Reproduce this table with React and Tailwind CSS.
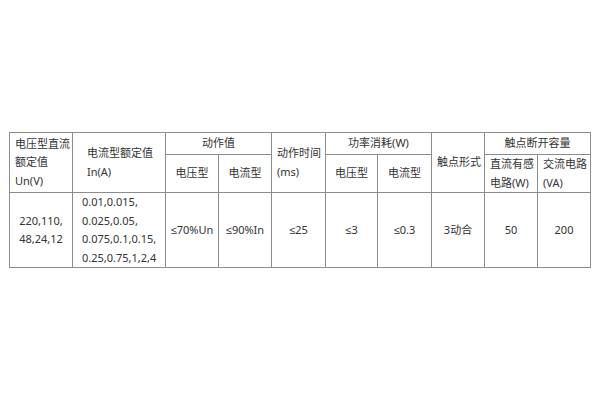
import React from 'react';

const cell = 'border border-[#8c8c8c] p-0 align-middle';

// narrow less-or-equal sign, the CJK font draws it full-width
const Le = () => <span style={{ fontFamily: '"Liberation Sans", sans-serif' }}>≤</span>;

export default function App() {
    return (
        <div
            className="flex h-[400px] w-[600px] items-center justify-center bg-white text-[11px] leading-[18.5px] text-[#333]"
            style={{ fontFamily: '"Noto Sans", "Noto Sans CJK SC", sans-serif' }}
        >
            <table className="w-[581px] table-fixed border-collapse">
                <colgroup>
                    <col className="w-[63px]" />
                    <col className="w-[93px]" />
                    <col className="w-[53px]" />
                    <col className="w-[53px]" />
                    <col className="w-[54px]" />
                    <col className="w-[52px]" />
                    <col className="w-[54px]" />
                    <col className="w-[53px]" />
                    <col className="w-[53px]" />
                    <col className="w-[53px]" />
                </colgroup>
                <tbody>
                    {/* Header row 1 */}
                    <tr className="h-[22px]">
                        <td rowSpan={2} className={`${cell} pl-[5px] text-left`}>
                            电压型直流<br />额定值<br />Un(V)
                        </td>
                        <td rowSpan={2} className={`${cell} pl-[14px] text-left`}>
                            电流型额定值<br />In(A)
                        </td>
                        <td colSpan={2} className={`${cell} text-center`}>动作值</td>
                        <td rowSpan={2} className={`${cell} pl-[5px] text-left`}>
                            动作时间<br />(ms)
                        </td>
                        <td colSpan={2} className={`${cell} text-center`}>功率消耗(W)</td>
                        <td rowSpan={2} className={`${cell} pl-[5px] text-left`}>触点形式</td>
                        <td colSpan={2} className={`${cell} text-center`}>触点断开容量</td>
                    </tr>

                    {/* Header row 2 */}
                    <tr className="h-[37px]">
                        <td className={`${cell} text-center`}>电压型</td>
                        <td className={`${cell} text-center`}>电流型</td>
                        <td className={`${cell} text-center`}>电压型</td>
                        <td className={`${cell} text-center`}>电流型</td>
                        <td className={`${cell} pl-[5px] text-left`}>直流有感<br />电路(W)</td>
                        <td className={`${cell} pl-[5px] text-left`}>交流电路<br />(VA)</td>
                    </tr>

                    {/* Data row */}
                    <tr className="h-[74px]">
                        <td className={`${cell} text-center`}>220,110,<br />48,24,12</td>
                        <td className={`${cell} pl-[9px] text-left`}>
                            0.01,0.015,<br />0.025,0.05,<br />0.075,0.1,0.15,<br />0.25,0.75,1,2,4
                        </td>
                        <td className={`${cell} text-center`}><Le />70%Un</td>
                        <td className={`${cell} text-center`}><Le />90%In</td>
                        <td className={`${cell} text-center`}><Le />25</td>
                        <td className={`${cell} text-center`}><Le />3</td>
                        <td className={`${cell} text-center`}><Le />0.3</td>
                        <td className={`${cell} text-center`}>3动合</td>
                        <td className={`${cell} text-center`}>50</td>
                        <td className={`${cell} text-center`}>200</td>
                    </tr>
                </tbody>
            </table>
        </div>
    );
}
